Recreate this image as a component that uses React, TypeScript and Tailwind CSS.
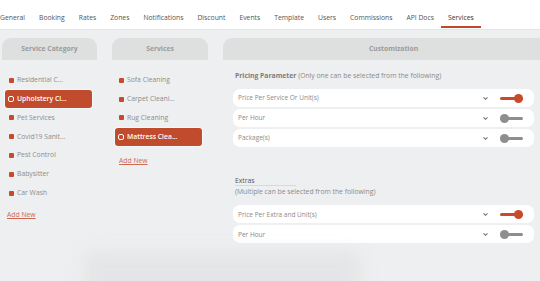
import { ChevronDown } from 'lucide-react';

const navItems = ['General', 'Booking', 'Rates', 'Zones', 'Notifications', 'Discount', 'Events', 'Template', 'Users', 'Commissions', 'API Docs', 'Services'];

const categories = ['Residential C...', 'Upholstery Cl...', 'Pet Services', 'Covid19 Sanit...', 'Pest Control', 'Babysitter', 'Car Wash'];
const services = ['Sofa Cleaning', 'Carpet Cleani...', 'Rug Cleaning', 'Mattress Clea...'];

function Toggle({ on }: { on: boolean }) {
    return (
        <div className="relative w-[23px] h-[9px] flex items-center">
            <div className={`h-[3px] w-full rounded-full ${on ? 'bg-[#c74a2b]' : 'bg-[#8e8e8e]'}`} />
            <div className={`absolute top-0 w-[9px] h-[9px] rounded-full ${on ? 'right-0 bg-[#c74a2b]' : 'left-0 bg-[#8e8e8e]'}`} />
        </div>
    );
}

function OptionRow({ label, on }: { label: string; on: boolean }) {
    return (
        <div className="h-[18px] bg-white rounded-[7px] flex items-center pl-[5px] pr-[11px]">
            <span className="text-[6.5px] text-[#8a8a8a]">{label}</span>
            <ChevronDown className="ml-auto w-[7px] h-[7px] text-[#777]" strokeWidth={3.5} />
            <div className="ml-[11px]">
                <Toggle on={on} />
            </div>
        </div>
    );
}

function ListItem({ label, selected }: { label: string; selected?: boolean }) {
    if (selected) {
        return (
            <div className="h-[18.8px] flex items-center">
                <div className="w-[87px] h-[18px] ml-[3px] bg-[#c14b2d] rounded-[3px] flex items-center pl-[3px] shadow-[0_0_0_1px_rgba(255,255,255,0.6)]">
                    <span className="w-[6px] h-[6px] border border-white rounded-[2px]" />
                    <span className="ml-[3px] text-[6.8px] font-semibold text-white">{label}</span>
                </div>
            </div>
        );
    }
    return (
        <div className="h-[18.8px] flex items-center pl-[7px]">
            <span className="w-[5px] h-[5px] bg-[#c64a2b] rounded-[1px]" />
            <span className="ml-[3px] text-[6.8px] text-[#8d8d8d]">{label}</span>
        </div>
    );
}

function Header({ title, bleed }: { title: string; bleed?: boolean }) {
    return (
        <div className={`h-[22px] bg-[#dedfdf] rounded-t-[9px] flex items-center justify-center ${bleed ? 'mr-[-24px]' : ''}`}>
            <span className="text-[6.8px] font-bold text-[#9b9b9b]">{title}</span>
        </div>
    );
}

export default function App() {
    return (
        <div className="w-[540px] h-[281px] overflow-hidden bg-[#eeeff0] font-['Open_Sans',sans-serif] relative">
            <div className="h-[30px] bg-white border-b border-[#e1e5e9] flex items-end">
                {navItems.map((n) => (
                    <div key={n} className={`relative mr-[14px] h-full flex items-center pt-[7px] ${n === 'Services' ? 'px-[7px] -ml-[7px]' : ''}`}>
                        <span className={`text-[6.8px] ${n === 'Services' ? 'text-[#333]' : 'text-[#555]'}`}>{n}</span>
                        {n === 'Services' && <div className="absolute left-0 right-0 bottom-[1px] h-[2px] bg-[#c4472b]" />}
                    </div>
                ))}
            </div>

            <div className="grid grid-cols-[95px_96px_1fr] gap-x-[15px] pl-[2px] pt-[8px]">
                <div>
                    <Header title="Service Category" />
                    <div className="pt-[11px]">
                        {categories.map((c, i) => (
                            <ListItem key={c} label={c} selected={i === 1} />
                        ))}
                        <div className="mt-[7px] pl-[5px] text-[6.8px] text-[#cf6a52] underline">Add New</div>
                    </div>
                </div>
                <div>
                    <Header title="Services" />
                    <div className="pt-[11px]">
                        {services.map((s, i) => (
                            <ListItem key={s} label={s} selected={i === 3} />
                        ))}
                        <div className="mt-[10px] pl-[7px] text-[6.8px] text-[#cf6a52] underline">Add New</div>
                    </div>
                </div>
                <div>
                    <Header title="Customization" bleed />
                    <div className="pl-[10px] pr-[6px] pt-[11px]">
                        <div className="pl-[2px] text-[6.8px] text-[#8a8a8a]">
                            <span className="font-bold text-[#7d7d7d]">Pricing Parameter</span> (Only one can be selected from the following)
                        </div>
                        <div className="mt-[8px] flex flex-col gap-[2px]">
                            <OptionRow label="Price Per Service Or Unit(s)" on />
                            <OptionRow label="Per Hour" on={false} />
                            <OptionRow label="Package(s)" on={false} />
                        </div>
                        <div className="mt-[29px] pl-[2px]">
                            <div className="w-[61px] border-b border-[#d8d8d8] text-[6.8px] text-[#555] leading-[9px]">Extras</div>
                            <div className="text-[6.8px] text-[#8a8a8a] mt-[1px]">(Multiple can be selected from the following)</div>
                        </div>
                        <div className="mt-[8px] flex flex-col gap-[2px]">
                            <OptionRow label="Price Per Extra and Unit(s)" on />
                            <OptionRow label="Per Hour" on={false} />
                        </div>
                    </div>
                </div>
            </div>

            <div className="absolute left-[85px] top-[252px] w-[275px] h-[50px] bg-[#e4e5e6] blur-[8px] rounded-[8px]" />
        </div>
    );
}
